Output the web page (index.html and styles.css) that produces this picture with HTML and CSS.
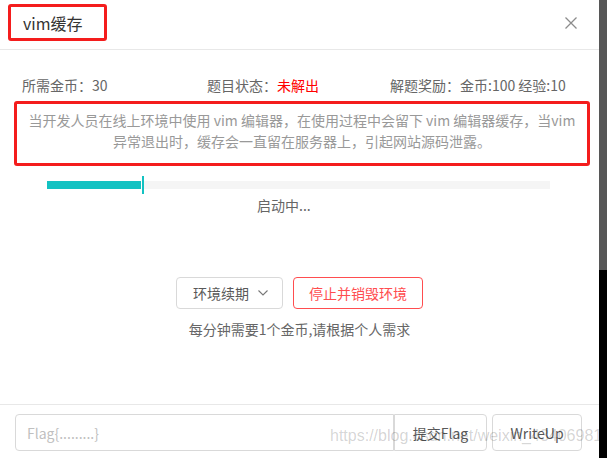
FILE: index.html
```html
<!DOCTYPE html>
<html lang="zh-CN">
<head>
<meta charset="utf-8">
<title>vim缓存</title>
<link rel="stylesheet" href="styles.css">
</head>
<body>
<div class="page">
  <div class="modal">
    <header class="head">
      <div class="title-box"><span class="title">vim缓存</span></div>
      <button class="close" aria-label="关闭">
        <svg width="12" height="12" viewBox="0 0 12 12"><path d="M0.5 0.5 L11.5 11.5 M11.5 0.5 L0.5 11.5" stroke="#8c8c8c" stroke-width="1.3" fill="none"/></svg>
      </button>
    </header>
    <main class="body">
      <div class="info">
        <span>所需金币：30</span>
        <span>题目状态：<em class="red">未解出</em></span>
        <span>解题奖励：金币:100 经验:10</span>
      </div>
      <p class="desc">当开发人员在线上环境中使用 vim 编辑器，在使用过程中会留下 vim 编辑器缓存，当vim<br>异常退出时，缓存会一直留在服务器上，引起网站源码泄露。</p>
      <div class="progress">
        <div class="track">
          <div class="fill" style="width:18.7%"></div>
          <span class="marker" style="left:18.9%"></span>
        </div>
      </div>
      <div class="status">启动中...</div>
      <div class="actions">
        <button class="btn btn-default">环境续期
          <svg class="chev" width="10" height="6" viewBox="0 0 10 6"><path d="M0.5 0.5 L5 5 L9.5 0.5" stroke="#777" stroke-width="1.1" fill="none"/></svg>
        </button>
        <button class="btn btn-danger">停止并销毁环境</button>
      </div>
      <div class="note">每分钟需要1个金币,请根据个人需求</div>
    </main>
    <footer class="foot">
      <div class="group">
        <input class="flag" type="text" placeholder="Flag{.........}">
        <button class="btn btn-submit">提交Flag</button>
      </div>
      <button class="btn btn-wu">WriteUp</button>
    </footer>
    <div class="watermark">https://blog.csdn.net/weixin_43406981</div>
  </div>
  <div class="scrollbar"><div class="thumb"></div></div>
</div>
</body>
</html>
```

FILE: styles.css
```css
* { box-sizing: border-box; }
html, body { margin: 0; padding: 0; background: #fff; }
body {
  font-family: "Noto Sans CJK SC", "Noto Sans", sans-serif;
  font-size: 14px;
  color: #666;
  overflow: hidden;
}
.page { display: flex; width: 607px; height: 458px; }
.modal {
  position: relative;
  width: 599px;
  height: 458px;
  display: flex;
  flex-direction: column;
  background: #fff;
}
.scrollbar { width: 8px; height: 458px; background: #000; }
.thumb { height: 270px; background: #575757; }

.head {
  height: 50px;
  border-bottom: 1px solid #e8e8e8;
  display: flex;
  align-items: flex-start;
  padding: 4px 22px 0 8px;
}
.title-box {
  width: 99px;
  height: 37px;
  border: 3px solid #f41d1d;
  border-radius: 3px;
  display: flex;
  align-items: center;
  padding-left: 12px;
}
.title { font-size: 16px; color: #333; line-height: 22px; }
.close {
  margin-left: auto;
  margin-top: 13px;
  padding: 0;
  border: 0;
  background: none;
  width: 12px;
  height: 12px;
  display: block;
}
.close svg { display: block; }

.body { flex: 1; }
.info {
  margin-top: 25px;
  padding-left: 22px;
  display: grid;
  grid-template-columns: 185px 183px auto;
  line-height: 21px;
  color: #666;
}
.red { color: #f00; font-style: normal; }
.desc {
  margin: 5px 9px 0 14px;
  border: 3px solid #f41d1d;
  border-radius: 3px;
  padding: 6px 2px 11px;
  text-align: center;
  color: #999;
  line-height: 21px;
  white-space: nowrap;
}
.progress { margin-top: 10px; height: 18px; padding: 5px 49px 0 47px; }
.track { position: relative; height: 8px; background: #f5f5f5; }
.fill { height: 8px; background: #13c2c2; }
.marker {
  position: absolute;
  top: -5px;
  width: 2px;
  height: 18px;
  background: #13c2c2;
  box-shadow: -1px 0 0 #fff;
}
.status { margin-top: 1px; padding-left: 257px; line-height: 21px; color: #666; }
.actions {
  margin-top: 61px;
  display: flex;
  justify-content: center;
  gap: 10px;
}
.btn {
  font-family: inherit;
  font-size: 14px;
  height: 32px;
  border-radius: 4px;
  background: #fff;
  border: 1px solid #d9d9d9;
  color: #595959;
  padding: 0;
  cursor: pointer;
}
.btn-default { width: 107px; display: flex; align-items: center; justify-content: center; gap: 9px; padding-left: 2px; }
.chev { display: block; }
.btn-danger { width: 130px; border-color: #ff4d4f; color: #ff4d4f; }
.note { margin-top: 10px; text-align: center; line-height: 21px; color: #666; }

.foot {
  border-top: 1px solid #e8e8e8;
  height: 54px;
  padding: 9px 17px 0 15px;
  display: flex;
  align-items: flex-start;
  gap: 5px;
}
.group { flex: 1; display: flex; }
.flag {
  flex: 1;
  height: 37px;
  border: 1px solid #d9d9d9;
  border-radius: 4px 0 0 4px;
  padding: 0 11px;
  font-family: inherit;
  font-size: 14px;
  color: #595959;
  outline: none;
}
.flag::placeholder { color: #bfbfbf; }
.btn-submit { width: 93px; height: 37px; border-radius: 0 4px 4px 0; }
.btn-wu { width: 90px; height: 37px; }
.watermark {
  position: absolute;
  left: 330px;
  top: 426px;
  font-family: "Liberation Sans", Arial, sans-serif;
  font-size: 16px;
  line-height: 20px;
  color: rgba(0, 0, 0, 0.18);
  white-space: nowrap;
  pointer-events: none;
}
```
